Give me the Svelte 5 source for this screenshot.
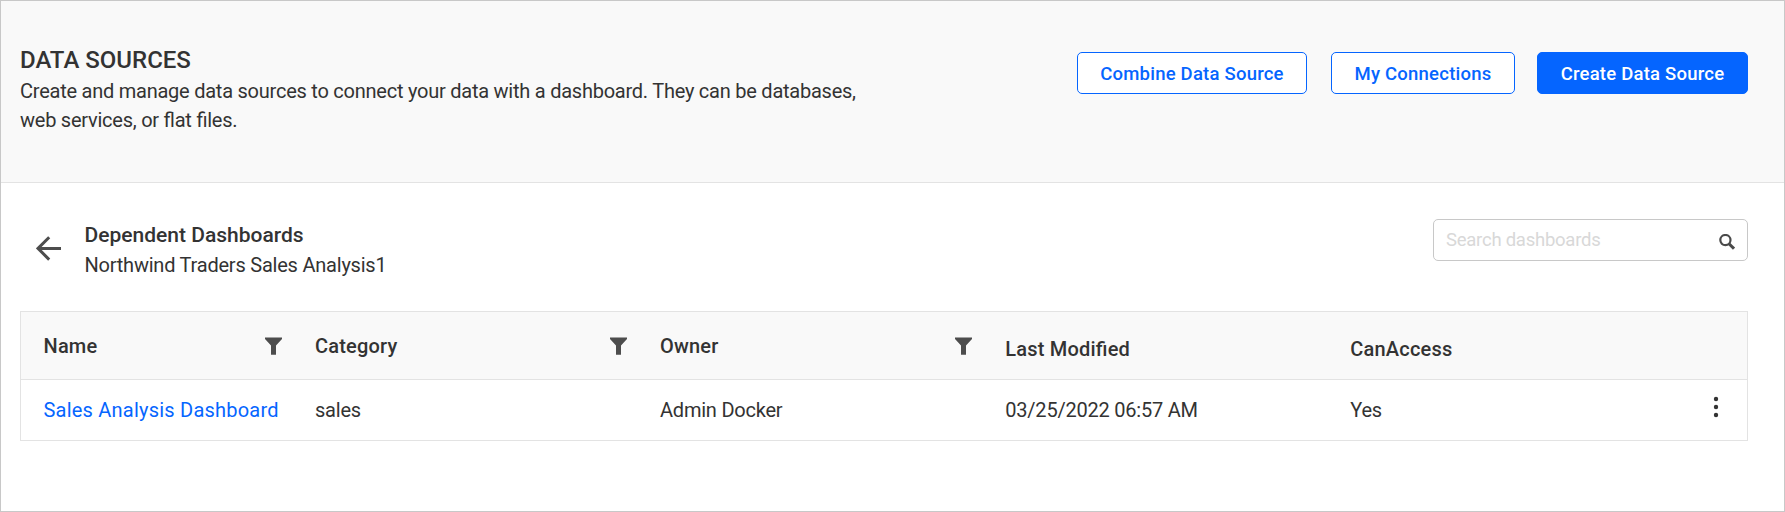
<script>
  const columns = [
    { label: 'Name', filter: true },
    { label: 'Category', filter: true },
    { label: 'Owner', filter: true },
    { label: 'Last Modified', filter: false },
    { label: 'CanAccess', filter: false }
  ];
  const rows = [
    {
      name: 'Sales Analysis Dashboard',
      category: 'sales',
      owner: 'Admin Docker',
      modified: '03/25/2022 06:57 AM',
      access: 'Yes'
    }
  ];
</script>

<div class="page">
  <header class="banner">
    <div class="intro">
      <h1>DATA SOURCES</h1>
      <p>Create and manage data sources to connect your data with a dashboard. They can be databases, web services, or flat files.</p>
    </div>
    <div class="actions">
      <button class="combine">Combine Data Source</button>
      <button class="connections">My Connections</button>
      <button class="primary">Create Data Source</button>
    </div>
  </header>

  <main>
    <div class="toolbar">
      <svg class="back" width="26" height="26" viewBox="0 0 26 26">
        <path d="M13.2 1.2 L2 12.4 L13.2 23.6 M2 12.4 H25" fill="none" stroke="#4d4d4d" stroke-width="3" />
      </svg>
      <div class="heading">
        <h2>Dependent Dashboards</h2>
        <span>Northwind Traders Sales Analysis1</span>
      </div>
      <div class="search">
        <input type="text" placeholder="Search dashboards" />
        <svg width="16" height="16" viewBox="0 0 16 16">
          <circle cx="6.4" cy="6.1" r="5.1" fill="none" stroke="#4a4a4a" stroke-width="2.2" />
          <path d="M10 9.7 L15 14.7" stroke="#4a4a4a" stroke-width="3" />
        </svg>
      </div>
    </div>

    <div class="table">
      <div class="row head">
        {#each columns as col}
          <div class="cell" class:plain={!col.filter}>
            <span>{col.label}</span>
            {#if col.filter}
              <svg width="17" height="18" viewBox="0 0 17 18">
                <path d="M0 0.6 H17 V2 L11 8.6 V17.8 H6 V8.6 L0 2 Z" fill="#4d4d4d" />
              </svg>
            {/if}
          </div>
        {/each}
      </div>
      {#each rows as row}
        <div class="row">
          <div class="cell"><a href="#dashboard">{row.name}</a></div>
          <div class="cell">{row.category}</div>
          <div class="cell">{row.owner}</div>
          <div class="cell">{row.modified}</div>
          <div class="cell last">
            <span>{row.access}</span>
            <svg width="6" height="22" viewBox="0 0 6 22">
              <circle cx="3" cy="3" r="2.2" fill="#333" />
              <circle cx="3" cy="11" r="2.2" fill="#333" />
              <circle cx="3" cy="19" r="2.2" fill="#333" />
            </svg>
          </div>
        </div>
      {/each}
    </div>
  </main>
</div>

<style>
  .page {
    box-sizing: border-box;
    height: 512px;
    border: 1px solid #c8c8c8;
    background: #fff;
    color: #333;
    font-family: Roboto, sans-serif;
    font-size: 20px;
    line-height: 29px;
    letter-spacing: -0.22px;
    font-feature-settings: "liga" 1;
  }
  h1, h2, p { margin: 0; }
  .banner {
    box-sizing: border-box;
    display: flex;
    justify-content: space-between;
    align-items: flex-start;
    height: 182px;
    padding: 42px 36px 0 19px;
    background: #f9f9f9;
    border-bottom: 1px solid #e3e3e3;
  }
  .intro { width: 860px; }
  .intro p { letter-spacing: -0.24px; }
  h1 { font-size: 24px; font-weight: 500; line-height: 34px; letter-spacing: 0; }
  .actions { display: flex; margin-top: 9px; }
  button {
    box-sizing: border-box;
    height: 42px;
    padding: 2px 0 0;
    border: 1px solid #0565ff;
    border-radius: 5px;
    background: #fff;
    color: #0565ff;
    font: 500 18.5px/38px Roboto, sans-serif;
    letter-spacing: 0.22px;
    white-space: nowrap;
  }
  .combine { width: 230px; margin-right: 24px; }
  .connections { width: 184px; margin-right: 22px; }
  .primary { width: 211px; background: #0565ff; color: #fff; }
  main { padding: 36px 36px 0 19px; }
  .toolbar { display: flex; align-items: flex-start; height: 92px; }
  .back { margin: 17px 22.5px 0 16px; }
  .heading { flex: 1; display: flex; flex-direction: column; padding-top: 1px; }
  h2 { font-size: 21px; font-weight: 500; line-height: 30px; letter-spacing: 0; }
  .heading span { line-height: 30px; }
  .search {
    box-sizing: border-box;
    display: flex;
    align-items: center;
    width: 315px;
    height: 42px;
    padding: 0 12px;
    border: 1px solid #c8c8c8;
    border-radius: 5px;
  }
  input {
    flex: 1;
    min-width: 0;
    padding: 0 0 1px;
    border: 0;
    outline: 0;
    background: transparent;
    font: 400 18.5px/24px Roboto, sans-serif;
    letter-spacing: -0.25px;
  }
  input::placeholder { color: #d8d8d8; opacity: 1; }
  .search svg { margin-top: 4px; }
  .table { border: 1px solid #e3e3e3; }
  .row {
    display: grid;
    grid-template-columns: 271.5px 345px 345.3px 345px 1fr;
    height: 60px;
    padding-left: 22.5px;
    line-height: 60px;
  }
  .head {
    height: 67px;
    background: #f9f9f9;
    border-bottom: 1px solid #e3e3e3;
    font-weight: 500;
    line-height: 68px;
    letter-spacing: 0.2px;
  }
  .cell { display: flex; white-space: nowrap; }
  .head .cell { justify-content: space-between; padding-right: 33px; }
  .head svg { margin-top: 25px; }
  .plain { padding-top: 3px; }
  a { color: #0565ff; text-decoration: none; letter-spacing: 0.22px; }
  .last { justify-content: space-between; padding-right: 28px; }
  .last svg { margin-top: 16px; }
</style>
